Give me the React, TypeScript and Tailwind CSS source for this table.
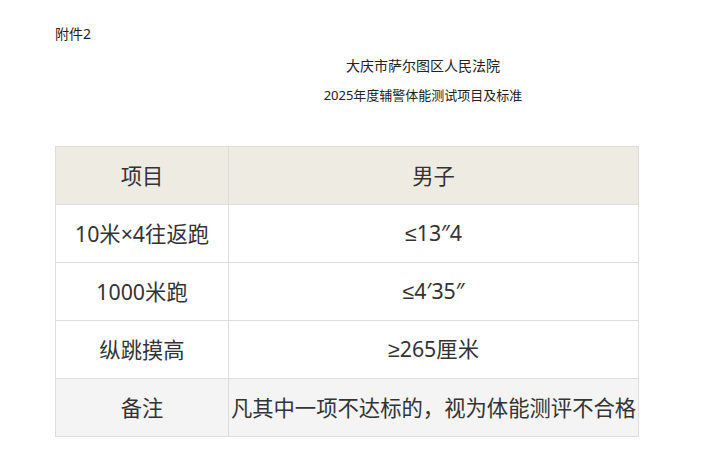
import React from 'react';

const Sym = ({ c }: { c: string }) => (
  <span className="font-['Liberation_Sans','DejaVu_Sans',sans-serif]">{c}</span>
);

const rows = [
  { item: '10米×4往返跑', sym: '≤', male: '13″4' },
  { item: '1000米跑', sym: '≤', male: '4′35″' },
  { item: '纵跳摸高', sym: '≥', male: '265厘米' },
];

export default function App() {
  return (
    <div className="min-h-screen bg-white text-[#333] font-['Noto_Sans','Noto_Sans_CJK_SC',sans-serif]">
      <div className="w-[584px] ml-[55px] pt-[26px]">
        <p className="text-[14px] leading-[16px] text-[#222]">附件2</p>
        <div className="pl-[152px] text-center text-[#222] mt-[16px]">
          <p className="leading-[16px] text-[14px]">大庆市萨尔图区人民法院</p>
          <p className="leading-[16px] mt-[13px] text-[13px]">2025年度辅警体能测试项目及标准</p>
        </div>
        <table className="mt-[43px] w-[584px] border-collapse text-[21.33px] text-center">
          <colgroup>
            <col className="w-[173px]" />
            <col />
          </colgroup>
          <thead>
            <tr className="bg-[#eeebe2] h-[58px]">
              <th className="border border-[#dddddd] font-normal">项目</th>
              <th className="border border-[#dddddd] font-normal">男子</th>
            </tr>
          </thead>
          <tbody>
            {rows.map((r) => (
              <tr key={r.item} className="h-[58px]">
                <td className="border border-[#dddddd]">{r.item}</td>
                <td className="border border-[#dddddd]">
                  <Sym c={r.sym} />
                  {r.male}
                </td>
              </tr>
            ))}
            <tr className="bg-[#f4f4f4] h-[58px]">
              <td className="border border-[#dddddd]">备注</td>
              <td className="border border-[#dddddd] whitespace-nowrap px-0">凡其中一项不达标的，视为体能测评不合格</td>
            </tr>
          </tbody>
        </table>
      </div>
    </div>
  );
}
